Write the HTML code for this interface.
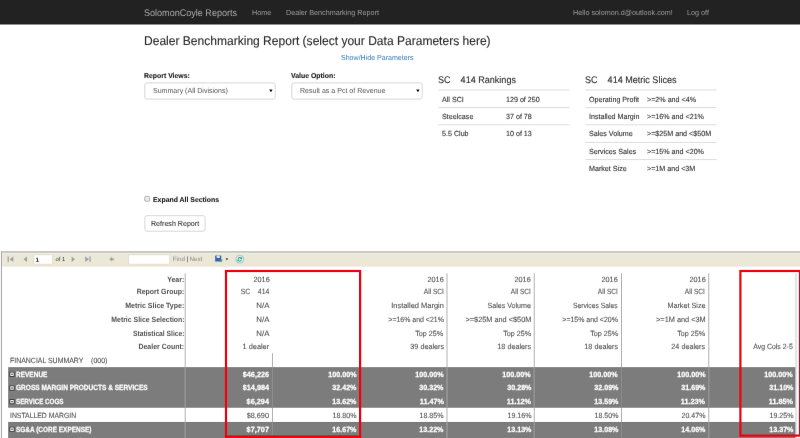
<!DOCTYPE html>
<html lang="en"><head><meta charset="utf-8"><title>Dealer Benchmarking Report - SolomonCoyle Reports</title>
<style>
*{box-sizing:border-box;margin:0;padding:0}
html,body{width:800px;height:438px;overflow:hidden;background:#fff}
body{position:relative;font-family:"Liberation Sans",Arial,sans-serif;font-size:7px;color:#333;line-height:1;text-rendering:geometricPrecision}
.L{position:absolute;left:0;top:0;width:800px;height:438px;overflow:hidden}
#la{filter:url(#fa)}
.a{position:absolute;white-space:nowrap}
.t{position:absolute;white-space:nowrap;font-weight:400;text-decoration:none;transform-origin:0 50%}
.nv{font-size:7.4px;font-weight:400;line-height:10px;height:10px;margin-top:-5px;transform:scaleX(0.975)}
.br{font-size:9.6px;font-weight:400;line-height:12px;height:12px;margin-top:-6px;transform:scaleX(0.943)}
.h2{font-size:12.6px;font-weight:400;line-height:14px;height:14px;margin-top:-7px;transform:scaleX(0.956)}
.lk{font-size:7.3px;font-weight:400;line-height:10px;height:10px;margin-top:-5px;transform:scaleX(0.966)}
.lb{font-size:7.1px;font-weight:700;line-height:10px;height:10px;margin-top:-5px;transform:scaleX(0.972)}
.st{font-size:7.3px;font-weight:400;line-height:10px;height:10px;margin-top:-5px;transform:scaleX(0.966)}
.h4{font-size:9.6px;font-weight:400;line-height:12px;height:12px;margin-top:-6px;transform:scaleX(0.943)}
.td{font-size:7.4px;font-weight:400;line-height:10px;height:10px;margin-top:-5px;transform:scaleX(0.966)}
.bt{font-size:7.35px;font-weight:400;line-height:10px;height:10px;margin-top:-5px;transform:scaleX(0.966)}
.r{font-size:7.5px;font-weight:400;line-height:10px;height:10px;margin-top:-5px}
.tbt{font-size:6.2px;font-weight:400;line-height:8px;height:8px;margin-top:-4px}
.tbs{font-size:5.8px;font-weight:400;line-height:8px;height:8px;margin-top:-4px}
.nv{color:#9d9d9d}
.br{color:#ababab}
.h2{color:#2b2b2b;-webkit-text-stroke:.12px #2b2b2b}
.lk{color:#337ab7}
.lb{color:#161616;-webkit-text-stroke:.1px #161616}
.st{color:#555}
.h4{color:#2e2e2e;-webkit-text-stroke:.12px #2e2e2e}
.td{color:#2e2e2e;-webkit-text-stroke:.1px #2e2e2e}
.bt{color:#333;-webkit-text-stroke:.08px #333}
.r{color:#505050;-webkit-text-stroke:.1px #505050}
.rt{transform-origin:100% 50%;text-align:right}
.r.b{font-weight:700;color:#505050;-webkit-text-stroke:0}
.r.w{color:#fff;font-weight:700;-webkit-text-stroke:.25px #fff}
.tbt,.tbs{color:#8a8a8a}
</style></head><body>
<svg width="0" height="0" style="position:absolute" aria-hidden="true"><defs>
<filter id="fa" x="0" y="0" width="100%" height="100%" color-interpolation-filters="sRGB"><feConvolveMatrix order="3 3" kernelMatrix="0.0018 0.0564 0.0018 0.0264 0.8272 0.0264 0.0018 0.0564 0.0018" divisor="1" targetX="1" targetY="1" edgeMode="none" preserveAlpha="false"/></filter>
</defs></svg>
<svg class="L" id="l0" width="800" height="438" viewBox="0 0 800 438">
<rect x="0" y="0" width="800" height="24.5" fill="#222"/>
<rect x="144.80" y="82.9" width="130.4" height="16.2" rx="2" fill="#fff" stroke="#d8d8d8" stroke-width="1"/>
<path d="M269.20 89.6h3.4l-1.7 2.7z" fill="#111"/>
<rect x="291.80" y="82.9" width="130.4" height="16.2" rx="2" fill="#fff" stroke="#d8d8d8" stroke-width="1"/>
<path d="M416.20 89.6h3.4l-1.7 2.7z" fill="#111"/>
<rect x="438.3" y="89.50" width="131" height="1" fill="#dedede"/>
<rect x="438.3" y="107.10" width="131" height="1" fill="#dedede"/>
<rect x="438.3" y="124.30" width="131" height="1" fill="#dedede"/>
<rect x="585.3" y="89.50" width="131.3" height="1" fill="#dedede"/>
<rect x="585.3" y="107.10" width="131.3" height="1" fill="#dedede"/>
<rect x="585.3" y="124.30" width="131.3" height="1" fill="#dedede"/>
<rect x="585.3" y="141.90" width="131.3" height="1" fill="#dedede"/>
<rect x="585.3" y="159.10" width="131.3" height="1" fill="#dedede"/>
<rect x="144.8" y="196.4" width="4.8" height="4.8" rx="0.8" fill="#ececec" stroke="#a2a2a2" stroke-width="0.8"/>
<rect x="144.9" y="215.7" width="60.2" height="15.5" rx="2" fill="#fff" stroke="#d8d8d8" stroke-width="1"/>
<rect x="1" y="251.4" width="799" height="1.4" fill="#a6a6a6"/>
<rect x="1" y="252.8" width="799" height="13.9" fill="#ebe8d7"/>
<rect x="1" y="252.8" width="799" height="0.8" fill="#f4f2e6"/>
<rect x="0.9" y="251.4" width="1.1" height="187" fill="#adadad"/>
<rect x="8.15" y="367.15" width="787.45" height="40.60" fill="#7c7c7c"/>
<rect x="8.15" y="421.95" width="787.45" height="16.05" fill="#7c7c7c"/>
<rect x="184.70" y="273.3" width="1" height="164.7" fill="#b0b2b5"/>
<rect x="184.70" y="367.15" width="1" height="40.60" fill="#8b8b8b"/>
<rect x="184.70" y="421.95" width="1" height="16.05" fill="#8b8b8b"/>
<rect x="271.96" y="353.2" width="1" height="84.8" fill="#b0b2b5"/>
<rect x="271.96" y="367.15" width="1" height="40.60" fill="#8b8b8b"/>
<rect x="271.96" y="421.95" width="1" height="16.05" fill="#8b8b8b"/>
<rect x="359.22" y="273.3" width="1" height="164.7" fill="#b0b2b5"/>
<rect x="359.22" y="367.15" width="1" height="40.60" fill="#8b8b8b"/>
<rect x="359.22" y="421.95" width="1" height="16.05" fill="#8b8b8b"/>
<rect x="446.48" y="273.3" width="1" height="164.7" fill="#b0b2b5"/>
<rect x="446.48" y="367.15" width="1" height="40.60" fill="#8b8b8b"/>
<rect x="446.48" y="421.95" width="1" height="16.05" fill="#8b8b8b"/>
<rect x="533.74" y="273.3" width="1" height="164.7" fill="#b0b2b5"/>
<rect x="533.74" y="367.15" width="1" height="40.60" fill="#8b8b8b"/>
<rect x="533.74" y="421.95" width="1" height="16.05" fill="#8b8b8b"/>
<rect x="621.00" y="273.3" width="1" height="164.7" fill="#b0b2b5"/>
<rect x="621.00" y="367.15" width="1" height="40.60" fill="#8b8b8b"/>
<rect x="621.00" y="421.95" width="1" height="16.05" fill="#8b8b8b"/>
<rect x="708.26" y="273.3" width="1" height="164.7" fill="#b0b2b5"/>
<rect x="708.26" y="367.15" width="1" height="40.60" fill="#8b8b8b"/>
<rect x="708.26" y="421.95" width="1" height="16.05" fill="#8b8b8b"/>
<rect x="795.52" y="273.3" width="1" height="164.7" fill="#c2d2da"/>
<rect x="9.3" y="371.70" width="5.3" height="5.2" rx="0.9" fill="#444"/>
<rect x="10.3" y="372.60" width="3.4" height="3.4" rx="0.4" fill="#f2f2f2"/>
<rect x="11.3" y="373.60" width="1.5" height="1.4" fill="#555"/>
<rect x="9.3" y="385.45" width="5.3" height="5.2" rx="0.9" fill="#444"/>
<rect x="10.3" y="386.35" width="3.4" height="3.4" rx="0.4" fill="#f2f2f2"/>
<rect x="11.3" y="387.35" width="1.5" height="1.4" fill="#555"/>
<rect x="9.3" y="399.05" width="5.3" height="5.2" rx="0.9" fill="#444"/>
<rect x="10.3" y="399.95" width="3.4" height="3.4" rx="0.4" fill="#f2f2f2"/>
<rect x="11.3" y="400.95" width="1.5" height="1.4" fill="#555"/>
<rect x="9.3" y="426.65" width="5.3" height="5.2" rx="0.9" fill="#444"/>
<rect x="10.3" y="427.55" width="3.4" height="3.4" rx="0.4" fill="#f2f2f2"/>
<rect x="11.3" y="428.55" width="1.5" height="1.4" fill="#555"/>
</svg>
<div class="L" id="la">
<a class="t br" style="left:144.3px;top:14px">SolomonCoyle Reports</a>
<a class="t nv" style="left:252.1px;top:13px">Home</a>
<a class="t nv" style="left:286.4px;top:13px">Dealer Benchmarking Report</a>
<a class="t nv" style="left:572.8px;top:13px">Hello solomon.d@outlook.com!</a>
<a class="t nv" style="left:687.3px;top:13px">Log off</a>
<h2 class="t h2" style="left:144.2px;top:41px">Dealer Benchmarking Report (select your Data Parameters here)</h2>
<a class="t lk" style="left:340.5px;top:58px">Show/Hide Parameters</a>
<label class="t lb" style="left:144.4px;top:76px">Report Views:</label>
<label class="t lb" style="left:291.0px;top:76px">Value Option:</label>
<span class="t st" style="left:152.7px;top:91px">Summary (All Divisions)</span>
<span class="t st" style="left:299.7px;top:91px">Result as a Pct of Revenue</span>
<h4 class="t h4" style="left:438.3px;top:81px">SC    414 Rankings</h4>
<h4 class="t h4" style="left:585.1px;top:81px">SC    414 Metric Slices</h4>
<span class="t td" style="left:441.9px;top:100px">All SCI</span>
<span class="t td" style="left:505.7px;top:100px">129 of 250</span>
<span class="t td" style="left:441.9px;top:117px">Steelcase</span>
<span class="t td" style="left:505.7px;top:117px">37 of 78</span>
<span class="t td" style="left:441.9px;top:134px">5.5 Club</span>
<span class="t td" style="left:505.7px;top:134px">10 of 13</span>
<span class="t td" style="left:588.9px;top:100px">Operating Profit</span>
<span class="t td" style="left:646.8px;top:100px">&gt;=2% and &lt;4%</span>
<span class="t td" style="left:588.9px;top:117px">Installed Margin</span>
<span class="t td" style="left:646.8px;top:117px">&gt;=16% and &lt;21%</span>
<span class="t td" style="left:588.9px;top:134px">Sales Volume</span>
<span class="t td" style="left:646.8px;top:134px">&gt;=$25M and &lt;$50M</span>
<span class="t td" style="left:588.9px;top:152px">Services Sales</span>
<span class="t td" style="left:646.8px;top:152px">&gt;=15% and &lt;20%</span>
<span class="t td" style="left:588.9px;top:169px">Market Size</span>
<span class="t td" style="left:646.8px;top:169px">&gt;=1M and &lt;3M</span>
<label class="t lb" style="left:152.9px;top:200px">Expand All Sections</label>
<span class="t bt" style="left:151.0px;top:224px">Refresh Report</span>
<svg class="a" style="left:0;top:252px" width="260" height="15" viewBox="0 0 260 15"><g fill="#9aa0a8"><rect x="7.6" y="4.4" width="1.2" height="5.6"/><path d="M13.4 4.4v5.6L9.6 7.2z"/><path d="M27 4.4v5.6L23.6 7.2z"/><path d="M71.6 4.4v5.6L75 7.2z"/><path d="M85.2 4.4v5.6L89 7.2z"/><rect x="89.4" y="4.4" width="1.2" height="5.6"/><path d="M109.4 7.2l2.4-2.4v1.4h2v2h-2v1.4z"/></g><rect x="33.7" y="2.7" width="18.8" height="9.5" rx="1" fill="#fff" stroke="#d6d2c0" stroke-width=".6"/><rect x="128.6" y="2.7" width="41" height="9.5" rx="1" fill="#fff" stroke="#d6d2c0" stroke-width=".6"/><rect x="215.2" y="3.6" width="6" height="6" rx=".6" fill="#3a5fb0"/><rect x="216.6" y="3.6" width="3.2" height="2.4" fill="#dfe8f6"/><path d="M219.5 7.6h3.2l-1.6 2.8z" fill="#3aa14a"/><path d="M225.6 6.6h2.6l-1.3 1.7z" fill="#111"/><circle cx="239.8" cy="7.2" r="4" fill="#d9ecfa" stroke="#8db7de" stroke-width=".7"/><path d="M237.8 6.6a2.2 2.2 0 0 1 3.6-1l.8-.6v2h-2l.6-.6a1.4 1.4 0 0 0-2.2.5zM241.8 8a2.2 2.2 0 0 1-3.6 1l-.8.6v-2h2l-.6.6a1.4 1.4 0 0 0 2.2-.5z" fill="#3aa14a"/></svg>
<span class="t tbt" style="left:35.4px;top:261px;color:#111;font-weight:700">1</span>
<span class="t tbs" style="left:55.6px;top:260px;color:#333">of 1</span>
<span class="t tbt" style="left:172.8px;top:260px">Find</span>
<span class="t tbt" style="left:186.6px;top:260px;color:#333">|</span>
<span class="t tbt" style="left:189.6px;top:260px">Next</span>
<span class="t r rt b" style="right:615.60px;top:280px;transform:scaleX(0.936)">Year:</span>
<span class="t r rt" style="right:530.80px;top:280px;transform:scaleX(0.972)">2016</span>
<span class="t r rt" style="right:356.40px;top:280px;transform:scaleX(0.972)">2016</span>
<span class="t r rt" style="right:269.00px;top:280px;transform:scaleX(0.972)">2016</span>
<span class="t r rt" style="right:182.00px;top:280px;transform:scaleX(0.972)">2016</span>
<span class="t r rt" style="right:94.70px;top:280px;transform:scaleX(0.972)">2016</span>
<span class="t r rt b" style="right:615.60px;top:292px;transform:scaleX(0.929)">Report Group:</span>
<span class="t r rt" style="right:530.80px;top:292px;transform:scaleX(0.911)">SC    414</span>
<span class="t r rt" style="right:356.40px;top:292px;transform:scaleX(0.875)">All SCI</span>
<span class="t r rt" style="right:269.00px;top:292px;transform:scaleX(0.875)">All SCI</span>
<span class="t r rt" style="right:182.00px;top:292px;transform:scaleX(0.875)">All SCI</span>
<span class="t r rt" style="right:94.70px;top:292px;transform:scaleX(0.875)">All SCI</span>
<span class="t r rt b" style="right:615.60px;top:306px;transform:scaleX(0.932)">Metric Slice Type:</span>
<span class="t r rt" style="right:530.80px;top:306px;transform:scaleX(1.050)">N/A</span>
<span class="t r rt" style="right:356.40px;top:306px;transform:scaleX(0.997)">Installed Margin</span>
<span class="t r rt" style="right:269.00px;top:306px;transform:scaleX(0.946)">Sales Volume</span>
<span class="t r rt" style="right:182.00px;top:306px;transform:scaleX(0.900)">Services Sales</span>
<span class="t r rt" style="right:94.70px;top:306px;transform:scaleX(0.965)">Market Size</span>
<span class="t r rt b" style="right:615.60px;top:320px;transform:scaleX(0.921)">Metric Slice Selection:</span>
<span class="t r rt" style="right:530.80px;top:320px;transform:scaleX(1.050)">N/A</span>
<span class="t r rt" style="right:356.40px;top:320px;transform:scaleX(0.927)">&gt;=16% and &lt;21%</span>
<span class="t r rt" style="right:269.00px;top:320px;transform:scaleX(0.977)">&gt;=$25M and &lt;$50M</span>
<span class="t r rt" style="right:182.00px;top:320px;transform:scaleX(0.927)">&gt;=15% and &lt;20%</span>
<span class="t r rt" style="right:94.70px;top:320px;transform:scaleX(0.979)">&gt;=1M and &lt;3M</span>
<span class="t r rt b" style="right:615.60px;top:334px;transform:scaleX(0.896)">Statistical Slice:</span>
<span class="t r rt" style="right:530.80px;top:334px;transform:scaleX(1.050)">N/A</span>
<span class="t r rt" style="right:356.40px;top:334px;transform:scaleX(0.958)">Top 25%</span>
<span class="t r rt" style="right:269.00px;top:334px;transform:scaleX(0.958)">Top 25%</span>
<span class="t r rt" style="right:182.00px;top:334px;transform:scaleX(0.958)">Top 25%</span>
<span class="t r rt" style="right:94.70px;top:334px;transform:scaleX(0.958)">Top 25%</span>
<span class="t r rt b" style="right:615.60px;top:347px;transform:scaleX(0.931)">Dealer Count:</span>
<span class="t r rt" style="right:530.80px;top:347px;transform:scaleX(0.977)">1 dealer</span>
<span class="t r rt" style="right:356.40px;top:347px;transform:scaleX(0.961)">39 dealers</span>
<span class="t r rt" style="right:269.00px;top:347px;transform:scaleX(0.961)">18 dealers</span>
<span class="t r rt" style="right:182.00px;top:347px;transform:scaleX(0.961)">18 dealers</span>
<span class="t r rt" style="right:94.70px;top:347px;transform:scaleX(0.961)">24 dealers</span>
<span class="t r rt" style="right:7.00px;top:347px;transform:scaleX(0.926)">Avg Cols 2-5</span>
<span class="t r" style="left:9.7px;top:361px;transform:scaleX(0.927)">FINANCIAL SUMMARY    (000)</span>
<span class="t r w" style="left:15.9px;top:375px;transform:scaleX(0.867)">REVENUE</span>
<span class="t r rt w" style="right:530.80px;top:375px;transform:scaleX(0.973)">$46,226</span>
<span class="t r rt w" style="right:443.50px;top:375px;transform:scaleX(0.954)">100.00%</span>
<span class="t r rt w" style="right:356.40px;top:375px;transform:scaleX(0.954)">100.00%</span>
<span class="t r rt w" style="right:269.00px;top:375px;transform:scaleX(0.954)">100.00%</span>
<span class="t r rt w" style="right:182.00px;top:375px;transform:scaleX(0.954)">100.00%</span>
<span class="t r rt w" style="right:94.70px;top:375px;transform:scaleX(0.954)">100.00%</span>
<span class="t r rt w" style="right:7.00px;top:375px;transform:scaleX(0.954)">100.00%</span>
<span class="t r w" style="left:15.9px;top:388px;transform:scaleX(0.871)">GROSS MARGIN PRODUCTS &amp; SERVICES</span>
<span class="t r rt w" style="right:530.80px;top:388px;transform:scaleX(0.973)">$14,984</span>
<span class="t r rt w" style="right:443.50px;top:388px;transform:scaleX(0.951)">32.42%</span>
<span class="t r rt w" style="right:356.40px;top:388px;transform:scaleX(0.951)">30.32%</span>
<span class="t r rt w" style="right:269.00px;top:388px;transform:scaleX(0.951)">30.28%</span>
<span class="t r rt w" style="right:182.00px;top:388px;transform:scaleX(0.951)">32.09%</span>
<span class="t r rt w" style="right:94.70px;top:388px;transform:scaleX(0.951)">31.69%</span>
<span class="t r rt w" style="right:7.00px;top:388px;transform:scaleX(0.951)">31.10%</span>
<span class="t r w" style="left:15.9px;top:402px;transform:scaleX(0.834)">SERVICE COGS</span>
<span class="t r rt w" style="right:530.80px;top:402px;transform:scaleX(0.973)">$6,294</span>
<span class="t r rt w" style="right:443.50px;top:402px;transform:scaleX(0.951)">13.62%</span>
<span class="t r rt w" style="right:356.40px;top:402px;transform:scaleX(0.966)">11.47%</span>
<span class="t r rt w" style="right:269.00px;top:402px;transform:scaleX(0.966)">11.12%</span>
<span class="t r rt w" style="right:182.00px;top:402px;transform:scaleX(0.951)">13.59%</span>
<span class="t r rt w" style="right:94.70px;top:402px;transform:scaleX(0.966)">11.23%</span>
<span class="t r rt w" style="right:7.00px;top:402px;transform:scaleX(0.966)">11.85%</span>
<span class="t r" style="left:9.5px;top:416px;transform:scaleX(0.913)">INSTALLED MARGIN</span>
<span class="t r rt" style="right:530.80px;top:416px;transform:scaleX(0.971)">$8,690</span>
<span class="t r rt" style="right:443.50px;top:416px;transform:scaleX(0.942)">18.80%</span>
<span class="t r rt" style="right:356.40px;top:416px;transform:scaleX(0.942)">18.85%</span>
<span class="t r rt" style="right:269.00px;top:416px;transform:scaleX(0.942)">19.16%</span>
<span class="t r rt" style="right:182.00px;top:416px;transform:scaleX(0.942)">18.50%</span>
<span class="t r rt" style="right:94.70px;top:416px;transform:scaleX(0.942)">20.47%</span>
<span class="t r rt" style="right:7.00px;top:416px;transform:scaleX(0.942)">19.25%</span>
<span class="t r w" style="left:15.9px;top:430px;transform:scaleX(0.861)">SG&amp;A (CORE EXPENSE)</span>
<span class="t r rt w" style="right:530.80px;top:430px;transform:scaleX(0.973)">$7,707</span>
<span class="t r rt w" style="right:443.50px;top:430px;transform:scaleX(0.951)">16.67%</span>
<span class="t r rt w" style="right:356.40px;top:430px;transform:scaleX(0.951)">13.22%</span>
<span class="t r rt w" style="right:269.00px;top:430px;transform:scaleX(0.951)">13.13%</span>
<span class="t r rt w" style="right:182.00px;top:430px;transform:scaleX(0.951)">13.08%</span>
<span class="t r rt w" style="right:94.70px;top:430px;transform:scaleX(0.951)">14.06%</span>
<span class="t r rt w" style="right:7.00px;top:430px;transform:scaleX(0.951)">13.37%</span>
</div>
<svg class="L" id="lt" width="800" height="438" viewBox="0 0 800 438">
<rect x="226.00" y="271.00" width="134.10" height="165.70" fill="none" stroke="#f5000d" stroke-width="2.2"/>
<rect x="224.9" y="435.6" width="136.3" height="2.4" fill="#f5000d"/>
<rect x="740.40" y="271.00" width="59.60" height="164.60" fill="none" stroke="#f5000d" stroke-width="2.2"/>
</svg>
</body></html>
